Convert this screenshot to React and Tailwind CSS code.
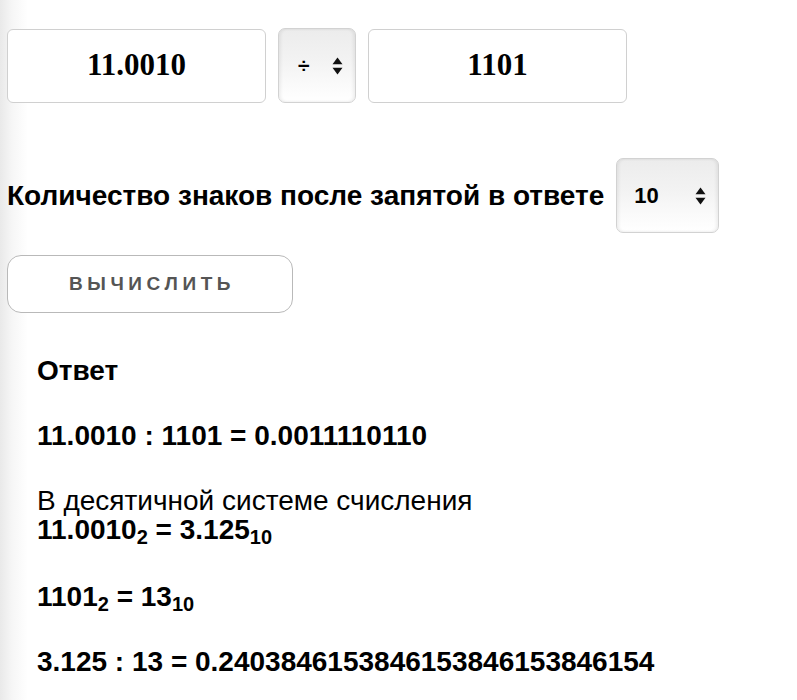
import React from 'react';

function Arrows({ className = '' }) {
  return (
    <svg width="11" height="18" viewBox="0 0 11 18" className={className}>
      <path d="M5.5 0.5 L10.5 7.3 L0.5 7.3 Z" fill="#111" />
      <path d="M5.5 17.5 L10.5 10.7 L0.5 10.7 Z" fill="#111" />
    </svg>
  );
}

const selectBox =
  'h-[75px] rounded-[7px] border border-[#d2d2d2] bg-[linear-gradient(to_bottom,#ececec_0%,#f3f3f3_45%,#fafafa_75%,#ffffff_100%)] shadow-[inset_2px_0_3px_rgba(0,0,0,0.06),inset_-2px_0_3px_rgba(0,0,0,0.06)] flex items-center';

const numberBox =
  'w-[259px] h-[74px] rounded-[6px] border-[1.5px] border-[#d0d0d0] bg-white flex items-center justify-center font-["Liberation_Serif",serif] font-bold text-[31px] text-black';

export default function App() {
  return (
    <div className='min-h-[700px] bg-[linear-gradient(to_right,#e9e9e9_0px,#f6f6f6_12px,#ffffff_28px)] pl-[7px] pt-[28px] font-["Liberation_Sans",Arial,sans-serif] text-black'>
      {/* Числа и операция */}
      <div className="flex items-center gap-[12px]">
        <div className={numberBox}>11.0010</div>
        <div className={selectBox + ' w-[78px] pl-[19px]'}>
          <span className="text-[21px] font-bold leading-none">÷</span>
          <Arrows className="ml-[22px]" />
        </div>
        <div className={numberBox}>1101</div>
      </div>

      {/* Точность */}
      <div className="mt-[55px] flex items-center gap-[12px]">
        <span className="text-[28px] font-bold leading-none">
          Количество знаков после запятой в ответе
        </span>
        <div className={selectBox + ' w-[103px] pl-[17px]'}>
          <span className="text-[22px] font-bold leading-none">10</span>
          <Arrows className="ml-[36px]" />
        </div>
      </div>

      <button className="mt-[22px] w-[286px] h-[58px] rounded-[14px] border-[1.5px] border-[#b9b9b9] bg-white text-[#555] text-[19px] font-bold tracking-[4.6px] flex items-center justify-center pl-[4px]">
        ВЫЧИСЛИТЬ
      </button>

      {/* Ответ */}
      <div className="mt-[43px] pl-[30px] flex flex-col gap-[36px] text-[28px] leading-[29px]">
        <p className="font-bold">Ответ</p>
        <p className="font-bold">11.0010 : 1101 = 0.0011110110</p>
        <p>
          В десятичной системе счисления
          <br />
          <span className="font-bold">
            11.0010<sub className="text-[20px]">2</sub> = 3.125<sub className="text-[20px]">10</sub>
          </span>
        </p>
        <p className="font-bold mt-[2px]">
          1101<sub className="text-[20px]">2</sub> = 13<sub className="text-[20px]">10</sub>
        </p>
        <p className="font-bold">3.125 : 13 = 0.2403846153846153846153846154</p>
      </div>
    </div>
  );
}
